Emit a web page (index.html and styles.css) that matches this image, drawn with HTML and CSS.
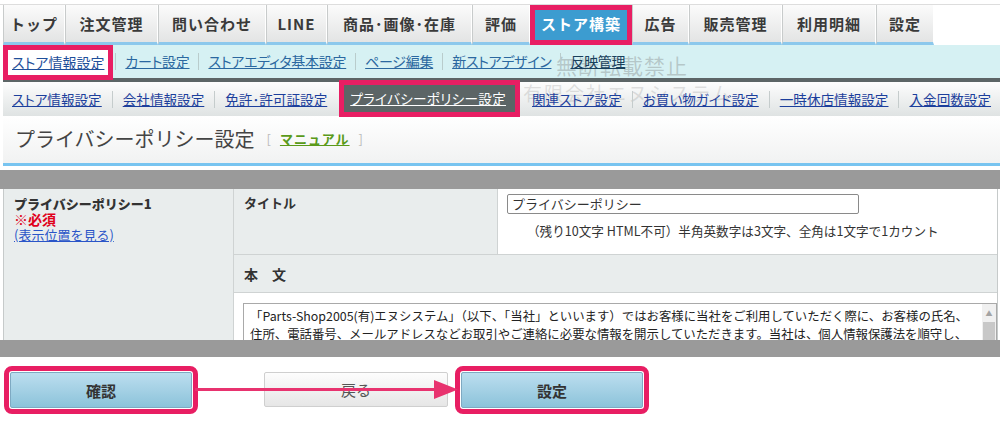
FILE: index.html
```html
<!DOCTYPE html>
<html lang="ja">
<head>
    <meta charset="UTF-8">
    <title>プライバシーポリシー設定</title>
    <link rel="stylesheet" href="styles.css">
</head>
<body>

<div class="page">

    <!-- メインタブ -->
    <ul class="tabs">
        <li>トップ</li>
        <li>注文管理</li>
        <li>問い合わせ</li>
        <li>LINE</li>
        <li>商品･画像･在庫</li>
        <li>評価</li>
        <li class="active">ストア構築</li>
        <li>広告</li>
        <li>販売管理</li>
        <li>利用明細</li>
        <li>設定</li>
    </ul>

    <!-- サブメニュー -->
    <div class="subnav">
        <a href="#" class="current">ストア情報設定</a>
        <a href="#">カート設定</a>
        <a href="#">ストアエディタ基本設定</a>
        <a href="#">ページ編集</a>
        <a href="#">新ストアデザイン</a>
        <a href="#" class="dark">反映管理</a>
        <span class="wm wm1">無断転載禁止</span>
    </div>

    <div class="subnav2">
        <span class="wm wm2">有限会社エヌシステム</span>
        <a href="#">ストア情報設定</a>
        <a href="#">会社情報設定</a>
        <a href="#">免許･許可証設定</a>
        <a href="#" class="current">プライバシーポリシー設定</a>
        <a href="#">関連ストア設定</a>
        <a href="#">お買い物ガイド設定</a>
        <a href="#">一時休店情報設定</a>
        <a href="#">入金回数設定</a>
    </div>

    <div class="heading">
        <h1>プライバシーポリシー設定</h1>
        <span class="manual">[ <a href="#">マニュアル</a> ]</span>
    </div>

    <div class="band"></div>

    <!-- 入力フォーム -->
    <div class="form">
        <div class="cell head policy">
            <strong>プライバシーポリシー1</strong>
            <span class="required">※必須</span>
            <a href="#">(表示位置を見る)</a>
        </div>
        <div class="cell head">タイトル</div>
        <div class="cell value">
            <div class="input">プライバシーポリシー</div>
            <p class="note">（残り10文字 HTML不可）半角英数字は3文字、全角は1文字で1カウント</p>
        </div>
        <div class="cell head wide">本　文</div>
        <div class="cell body">
            <div class="textarea">
                <div class="text">「Parts-Shop2005(有)エヌシステム」（以下、「当社」といいます）ではお客様に当社をご利用していただく際に、お客様の氏名、<br>住所、電話番号、メールアドレスなどお取引やご連絡に必要な情報を開示していただきます。当社は、個人情報保護法を順守し、</div>
                <div class="scroll">
                    <span class="arrow">▲</span>
                    <span class="thumb"></span>
                </div>
            </div>
        </div>
    </div>

    <div class="band band-bottom"></div>

    <div class="buttons">
        <button class="btn btn-blue mark">確認</button>
        <button class="btn btn-gray">戻る</button>
        <button class="btn btn-blue mark">設定</button>
        <svg class="arrow-line" width="1000" height="65" viewBox="0 0 1000 65">
            <rect x="195" y="31" width="245" height="3" fill="#e8336f"/>
            <polygon points="434,23 458,32.5 434,42" fill="#e8336f"/>
        </svg>
    </div>

</div>

</body>
</html>
```

FILE: styles.css
```css
* {
    box-sizing: border-box;
}
body {
    margin: 0;
    width: 1000px;
    height: 422px;
    overflow: hidden;
    background: #fff;
    color: #333;
    font-family: "Noto Sans CJK JP", "Noto Sans", sans-serif;
}
.page {
    position: relative;
}

/* メインタブ */
.tabs {
    display: flex;
    list-style: none;
    margin: 4px 0 0;
    padding: 0 0 0 3px;
    border-top: 1px solid #ddd;
    height: 41px;
}
.tabs li {
    display: flex;
    align-items: center;
    justify-content: center;
    height: 40px;
    border-left: 1px solid #c8cbcb;
    border-right: 1px solid #fff;
    border-bottom: 3px solid #8cc8ec;
    background: linear-gradient(#fbfbfb, #e3e4e4);
    font-size: 15px;
    font-weight: bold;
    letter-spacing: 1px;
    color: #3a3a3a;
    white-space: nowrap;
}
.tabs li:nth-child(1) { width: 62px; }
.tabs li:nth-child(2) { width: 93px; }
.tabs li:nth-child(3) { width: 108px; }
.tabs li:nth-child(4) { width: 61px; }
.tabs li:nth-child(5) { width: 145px; }
.tabs li:nth-child(6) { width: 58px; }
.tabs li:nth-child(7) { width: 102px; }
.tabs li:nth-child(8) { width: 57px; }
.tabs li:nth-child(9) { width: 93px; }
.tabs li:nth-child(10) { width: 94px; }
.tabs li:nth-child(11) { width: 58px; }
.tabs li.active {
    background: #3c9cd0;
    color: #fff;
    border-bottom-color: #3c9cd0;
    outline: 5px solid #e81e63;
    outline-offset: -5px;
}

/* サブメニュー 1段目 */
.subnav {
    position: relative;
    display: flex;
    align-items: center;
    height: 37px;
    margin-left: 3px;
    background: #d6f1f3;
    border-bottom: 4px solid #5c6566;
}
.subnav a {
    position: relative;
    z-index: 1;
    flex-shrink: 0;
    padding: 0 9px 0 9px;
    line-height: 17px;
    border-left: 1px solid #b9cccc;
    font-size: 14px;
    letter-spacing: -0.3px;
    font-feature-settings: "palt";
    white-space: nowrap;
    color: #2b68a0;
}
.subnav a:first-child {
    border-left: none;
}
.subnav a.current {
    display: flex;
    align-items: center;
    height: 35px;
    margin-top: 2px;
    margin-right: 2px;
    padding: 0 9px;
    letter-spacing: 0;
    background: #fff;
    color: #1f4f9a;
    outline: 5px solid #e81e63;
    outline-offset: -5px;
}
.subnav a.dark {
    color: #19405c;
}

/* サブメニュー 2段目 */
.subnav2 {
    position: relative;
    display: flex;
    align-items: center;
    height: 34px;
    margin-left: 3px;
    background: linear-gradient(#fdfdfd, #dfe3e3);
}
.subnav2 a {
    position: relative;
    z-index: 1;
    flex-shrink: 0;
    padding: 0 10px 0 10px;
    line-height: 17px;
    border-left: 1px solid #c5cccc;
    font-size: 13.6px;
    font-feature-settings: "palt";
    white-space: nowrap;
    color: #1c3f9c;
}
.subnav2 a:first-of-type {
    border-left: none;
    padding-left: 9px;
}
.subnav2 a.current {
    display: flex;
    align-items: center;
    height: 37px;
    margin: 0 0 1px 2px;
    padding: 0 14px 0 11px;
    border-left: none;
    background: #5c6566;
    color: #fff;
    letter-spacing: 0.3px;
    outline: 5px solid #e81e63;
    outline-offset: -5px;
}
.subnav2 a.current + a {
    border-left: none;
    padding-left: 12px;
}

/* 透かし */
.wm {
    position: absolute;
    white-space: nowrap;
    color: rgba(120, 120, 120, 0.35);
    pointer-events: none;
}
.wm1 {
    left: 553px;
    top: 5px;
    font-size: 21px;
    letter-spacing: 1px;
}
.wm2 {
    left: 520px;
    top: -3px;
    font-size: 19px;
    letter-spacing: 2px;
    color: rgba(140, 140, 140, 0.25);
}

/* 見出し */
.heading {
    display: flex;
    align-items: center;
    height: 50px;
    margin-left: 3px;
    padding: 0 0 2px 12px;
    background: linear-gradient(#fff, #f1f2f2);
    border-bottom: 3px solid #78c4f0;
}
.heading h1 {
    margin: 0;
    font-size: 20px;
    font-weight: normal;
    color: #444;
}
.manual {
    margin-left: 12px;
    font-size: 13px;
    color: #bbb;
    word-spacing: 6px;
}
.manual a {
    color: #5a9a1a;
    font-weight: bold;
    letter-spacing: 1px;
}

.band {
    height: 19px;
    margin-top: 4px;
    background: #9a9a9a;
}
.band-bottom {
    height: 17px;
    margin-top: 0;
}

/* フォーム */
.form {
    display: grid;
    grid-template-columns: 230px 264px 1fr;
    grid-template-rows: 66px 38px 1fr;
    height: 151px;
    margin-left: 3px;
    margin-right: 2px;
    border-left: 1px solid #c6caca;
    border-right: 1px solid #c6caca;
    overflow: hidden;
    font-size: 13px;
}
.cell {
    border-right: 1px solid #cfd3d3;
    border-bottom: 1px solid #cfd3d3;
}
.head {
    background: #e9eded;
    padding: 5px 10px;
    font-weight: bold;
    line-height: 18px;
}
.policy {
    grid-row: 1 / 4;
    display: flex;
    flex-direction: column;
    align-items: flex-start;
    line-height: 15px;
    padding-top: 7px;
}
.required {
    color: #e0001b;
    font-size: 14px;
    line-height: 16px;
}
.policy a {
    font-weight: normal;
    color: #2a55c8;
}
.value {
    padding: 5px 0 0 9px;
    border-right: none;
}
.input {
    width: 352px;
    height: 20px;
    padding: 0 4px;
    border: 1px solid #8a8a8a;
    border-radius: 2px;
    line-height: 18px;
    font-size: 13px;
}
.note {
    margin: 7px 0 0 20px;
    font-size: 12.6px;
}
.wide {
    grid-column: 2 / 4;
    padding-top: 10px;
    font-size: 14px;
    border-right: none;
}
.body {
    grid-column: 2 / 4;
    padding: 10px 0 0 9px;
    border: none;
}
.textarea {
    display: flex;
    height: 60px;
    border: 1px solid #a9a9a9;
}
.text {
    flex: 1;
    padding: 3px 6px;
    font-size: 12.4px;
    line-height: 18px;
    color: #222;
    white-space: nowrap;
    overflow: hidden;
}
.scroll {
    display: flex;
    flex-direction: column;
    align-items: center;
    width: 14px;
    background: #f0f0f0;
}
.scroll .arrow {
    font-size: 7px;
    line-height: 18px;
    color: #a3a3a3;
}
.scroll .thumb {
    width: 12px;
    flex: 1;
    background: #c8c8c8;
}

/* ボタン */
.buttons {
    position: relative;
    display: flex;
    padding: 15px 0 0 10px;
}
.btn {
    height: 36px;
    font-family: inherit;
    font-size: 15px;
    border-radius: 2px;
    cursor: pointer;
}
.btn-blue {
    width: 182px;
    background: linear-gradient(#bcdeef, #8cc3da);
    border: 1px solid #7ea9c2;
    color: #333;
    font-weight: bold;
}
.btn-gray {
    width: 184px;
    margin: 0 13px 0 72px;
    height: 35px;
    background: linear-gradient(#fdfdfd, #e6e6e6);
    border: 1px solid #cfcfcf;
    color: #555;
}
.mark {
    outline: 5px solid #e81e63;
    outline-offset: 1px;
}
.arrow-line {
    position: absolute;
    left: 0;
    top: 0;
}
```
